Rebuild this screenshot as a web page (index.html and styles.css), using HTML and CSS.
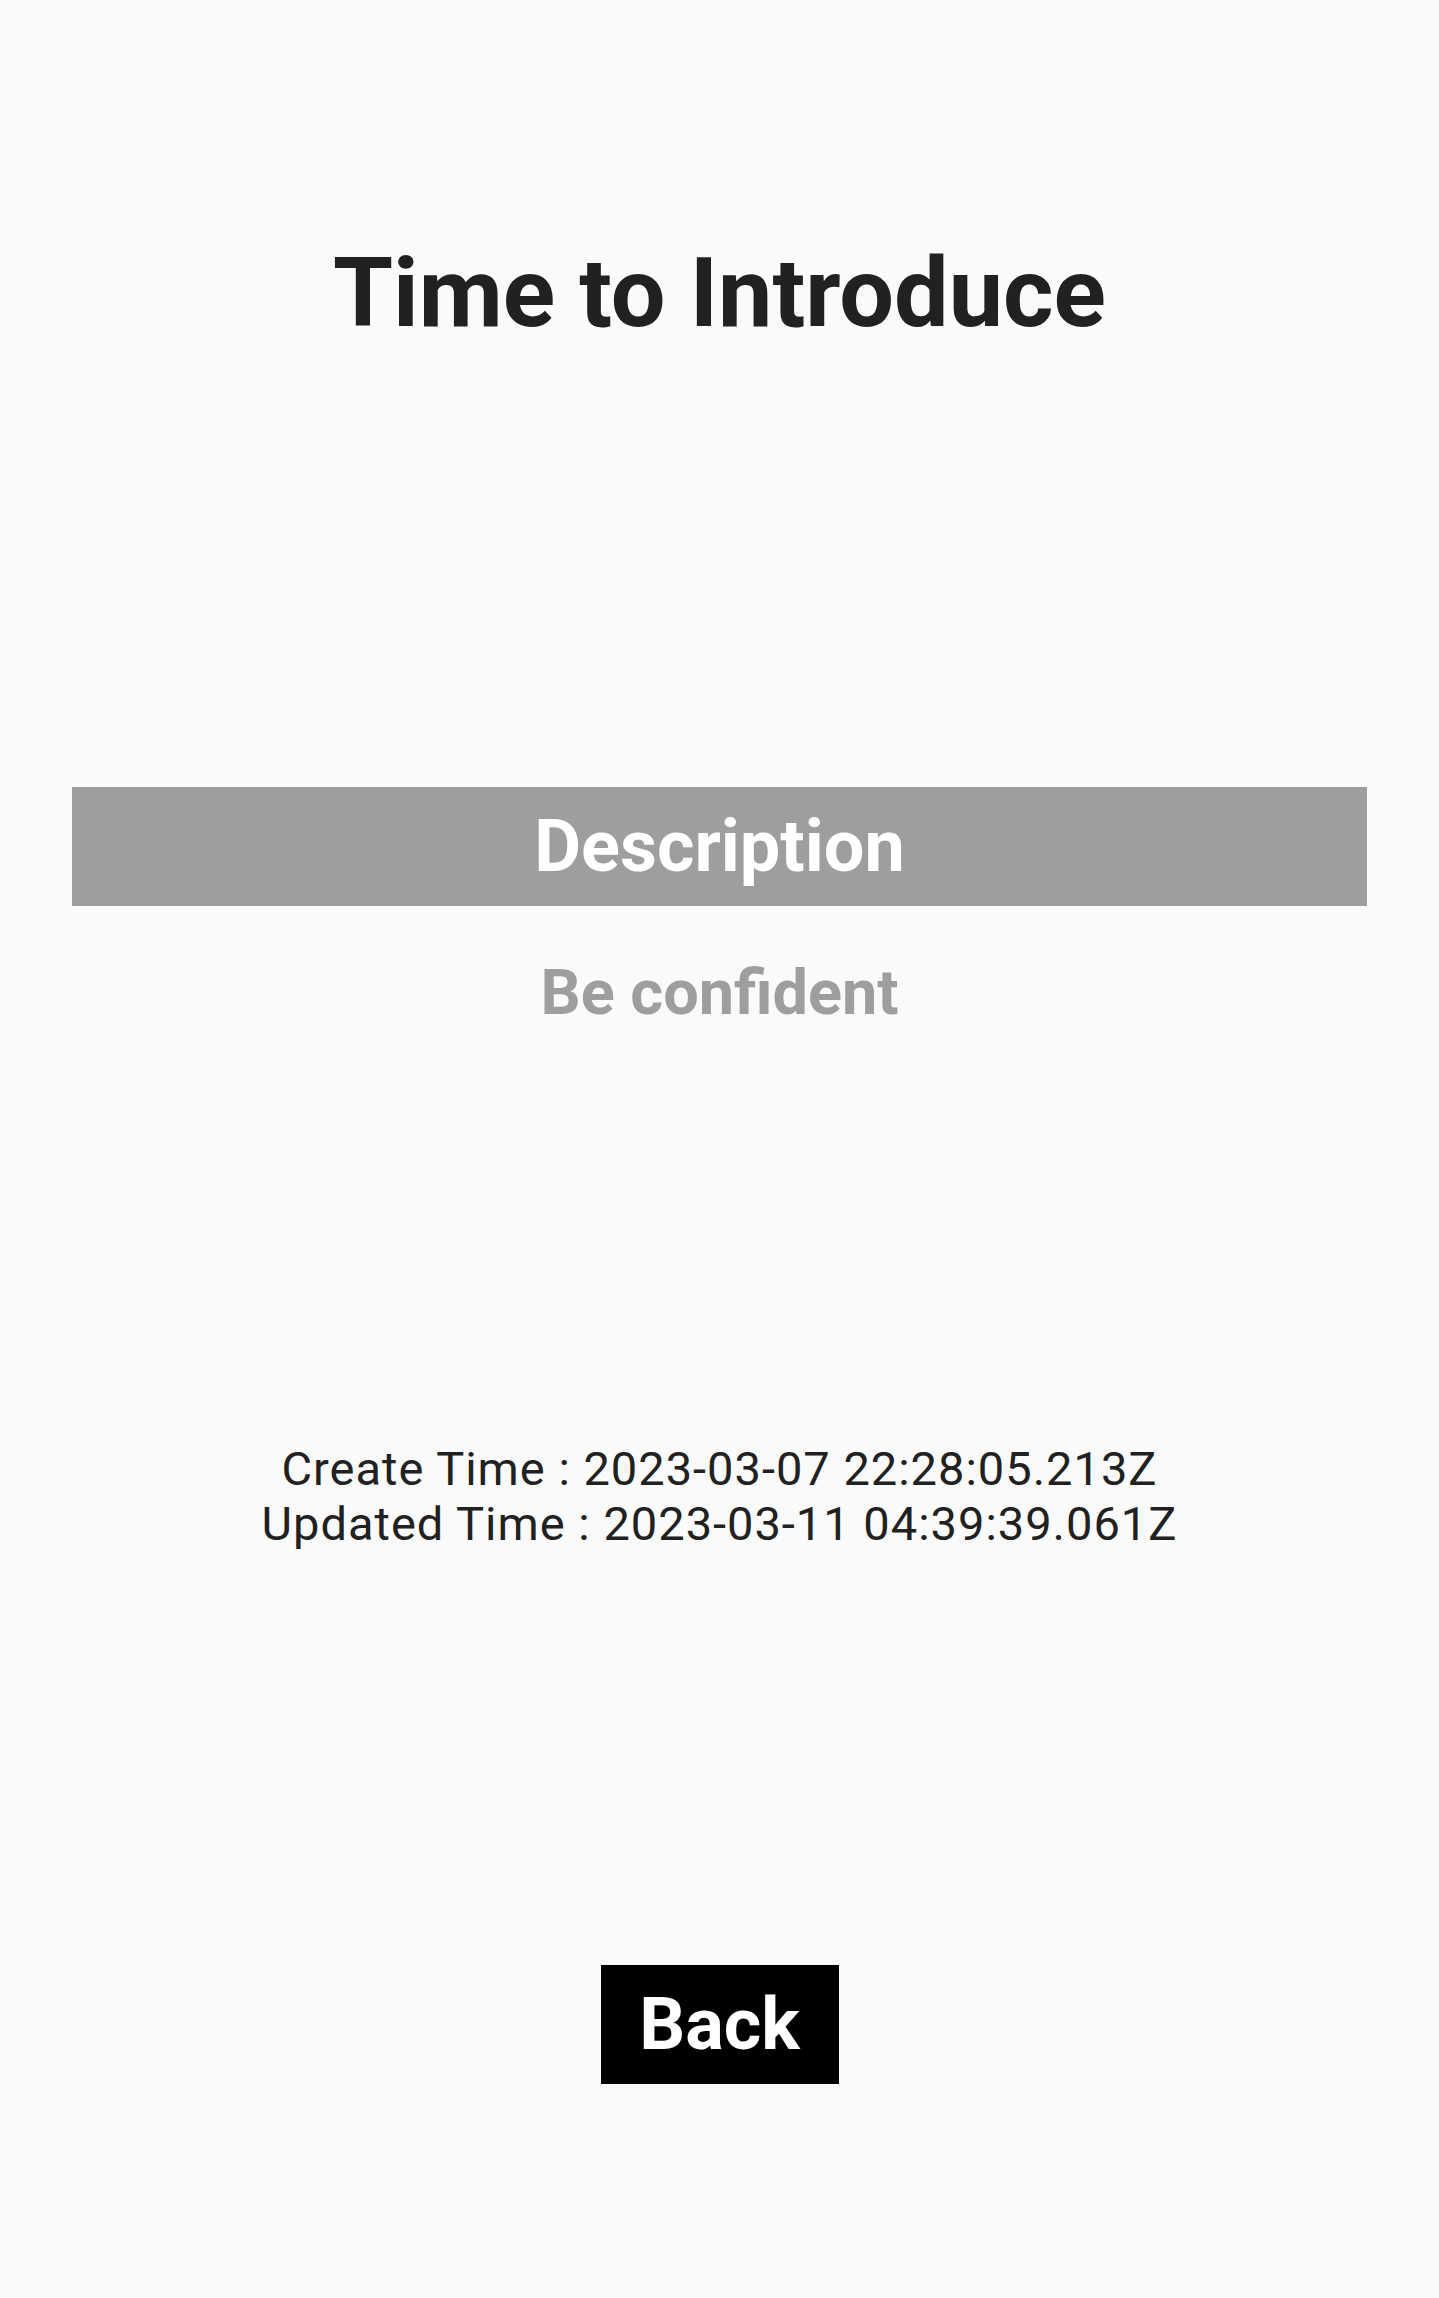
FILE: index.html
```html
<!DOCTYPE html>
<html lang="en">
<head>
<meta charset="utf-8">
<title>Time to Introduce</title>
<link rel="stylesheet" href="styles.css">
</head>
<body>
<main class="page">
  <h1 class="title">Time to Introduce</h1>
  <div class="section-head">Description</div>
  <p class="desc">Be confident</p>
  <div class="times">
    <div>Create Time : 2023-03-07 22:28:05.213Z</div>
    <div>Updated Time : 2023-03-11 04:39:39.061Z</div>
  </div>
  <div class="actions">
    <button class="back-btn" type="button">Back</button>
  </div>
</main>
</body>
</html>
```
FILE: styles.css
```css
html, body {
  margin: 0;
  padding: 0;
  background: #fafafa;
}
body {
  font-family: Roboto, "Noto Sans", "Liberation Sans", sans-serif;
  color: #212121;
}
.page {
  display: flex;
  flex-direction: column;
  align-items: stretch;
  padding: 237px 72px 0;
  min-height: 2298px;
  box-sizing: border-box;
}
.title {
  margin: 0;
  font-size: 97px;
  font-weight: 700;
  line-height: 112px;
  text-align: center;
  color: #212121;
}
.section-head {
  margin-top: 438px;
  height: 119px;
  background: #9e9e9e;
  color: #ffffff;
  font-size: 72px;
  font-weight: 700;
  display: flex;
  align-items: center;
  justify-content: center;
}
.desc {
  margin: 50px 0 0;
  font-size: 63px;
  font-weight: 700;
  color: #9e9e9e;
  text-align: center;
  line-height: normal;
}
.times {
  margin-top: 412px;
  font-size: 47px;
  line-height: 55px;
  letter-spacing: 1px;
  text-align: center;
  color: #212121;
}
.actions {
  margin-top: 414px;
  display: flex;
  justify-content: center;
}
.back-btn {
  width: 238px;
  height: 119px;
  background: #000000;
  color: #ffffff;
  border: none;
  border-radius: 0;
  font-family: Roboto, "Noto Sans", "Liberation Sans", sans-serif;
  font-size: 72px;
  font-weight: 700;
  padding: 0;
  display: flex;
  align-items: center;
  justify-content: center;
}
```
